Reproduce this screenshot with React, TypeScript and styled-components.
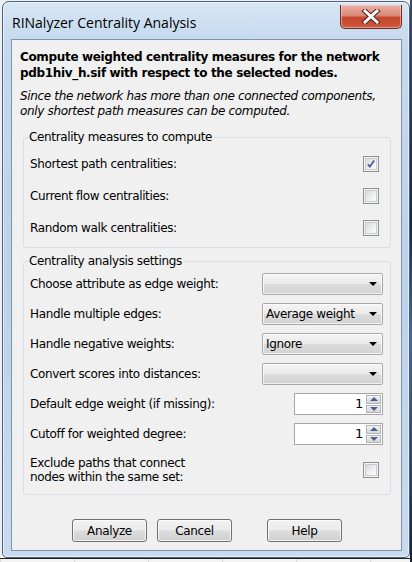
import { FC } from 'react';
import styled, { createGlobalStyle } from 'styled-components';

const GlobalStyle = createGlobalStyle`
  html, body {
    margin: 0;
    padding: 0;
  }
  body {
    width: 412px;
    height: 562px;
    overflow: hidden;
    background: #e4e7eb;
    font-family: "DejaVu Sans", Tahoma, sans-serif;
    font-size: 12px;
    letter-spacing: -0.36px;
    color: #000;
  }
`;

const Desktop = styled.div`
  width: 412px;
  height: 562px;
  display: grid;
  grid-template-columns: 410px 2px;
  grid-template-rows: 558px 4px;
`;

const WindowCell = styled.div`
  padding: 1px 0 0 2px;
  background: #eef0f3;
`;

const RightStrip = styled.div`
  grid-row: 1 / 3;
  grid-column: 2;
  background: linear-gradient(180deg, #3b4a66 0%, #1d2638 40%, #4c6a92 60%, #1a2233 100%);
`;

const BottomStrip = styled.div`
  background: repeating-linear-gradient(90deg, #dadada 0px, #dadada 1px, #f4f4f4 1px, #f4f4f4 74px);
  border-top: 1px solid #222;
`;

const Window = styled.div`
  box-sizing: border-box;
  width: 408px;
  height: 557px;
  border: 1px solid #4d627c;
  border-radius: 7px 7px 5px 5px;
  background: linear-gradient(180deg, #d7e6f5 0%, #c5d9ee 7%, #bcd2ea 50%, #c8dbef 100%);
  box-shadow: inset 0 0 0 1px rgba(255, 255, 255, 0.55);
  display: flex;
  flex-direction: column;
`;

const TitleBar = styled.div`
  height: 37px;
  display: flex;
  align-items: flex-start;
  padding-left: 9px;
`;

const TitleText = styled.div`
  margin-top: 11px;
  font-family: "Open Sans", "Noto Sans", sans-serif;
  font-size: 14px;
  letter-spacing: 0;
  line-height: 20px;
  color: #000;
`;

const CloseButton = styled.div`
  margin-left: auto;
  margin-right: 7px;
  margin-top: 3px;
  width: 62px;
  height: 24px;
  box-sizing: border-box;
  border: 1px solid #6e2a22;
  border-top: none;
  border-radius: 0 0 5px 5px;
  background: linear-gradient(180deg, #eab1a6 0%, #d98a78 45%, #c5452c 55%, #cf5b3d 100%);
  box-shadow: inset 0 0 0 1px rgba(255, 220, 210, 0.5);
  display: flex;
  align-items: center;
  justify-content: center;
`;

const CloseGlyph: FC = () => (
  <svg width="22" height="15" viewBox="0 0 22 15">
    <path d="M5 2 L17 13 M17 2 L5 13" stroke="#5a2119" strokeWidth="5" strokeLinecap="square" />
    <path d="M5 2 L17 13 M17 2 L5 13" stroke="#ffffff" strokeWidth="3" strokeLinecap="square" />
  </svg>
);

const Client = styled.div`
  flex: 1;
  margin: 0 7px 6px 8px;
  border: 1px solid #7f93aa;
  background: #f0f0f0;
  display: flex;
  flex-direction: column;
`;

const Heading = styled.p`
  margin: 9px 0 0 8px;
  font-weight: bold;
  font-size: 12px;
  line-height: 16px;
  letter-spacing: -0.34px;
`;

const Note = styled.p`
  margin: 8px 0 0 8px;
  font-style: italic;
  font-size: 12px;
  line-height: 15px;
  letter-spacing: -0.33px;
`;

const Group = styled.fieldset<{ $top: number; $pad: number }>`
  margin: ${(p) => p.$top}px 10px 0 11px;
  padding: ${(p) => p.$pad}px 7px 3px 6px;
  border: 1px solid #d5dfe5;
  border-radius: 3px;
  min-width: 0;
`;

const Legend = styled.legend`
  margin-left: -1px;
  padding: 0 2px 0 0;
  font-size: 12px;
  line-height: 14px;
`;

const Row = styled.div<{ $h: number }>`
  height: ${(p) => p.$h}px;
  display: flex;
  align-items: center;
  justify-content: space-between;
`;

const Label = styled.span`
  line-height: 14px;
`;

const CheckBox = styled.div`
  box-sizing: border-box;
  width: 16px;
  height: 16px;
  margin-right: 4px;
  border: 1px solid #8f8f8f;
  padding: 1px;
  background: #f4f4f4;
  & > div {
    width: 100%;
    height: 100%;
    box-sizing: border-box;
    border: 1px solid #c9cdd3;
    background: linear-gradient(135deg, #d6d8dc 0%, #eceef0 50%, #fbfbfb 100%);
    display: flex;
    align-items: center;
    justify-content: center;
  }
`;

const CheckMark: FC = () => (
  <svg width="12" height="12" viewBox="0 0 12 12">
    <path d="M2.2 6.2 L4.6 9.2 L9.8 1.8" stroke="#43568f" strokeWidth="2" fill="none" />
  </svg>
);

const Combo = styled.div`
  box-sizing: border-box;
  width: 121px;
  height: 22px;
  border: 1px solid #a9a9a9;
  border-radius: 2px;
  background: linear-gradient(180deg, #f4f4f4 0%, #ebebeb 48%, #dcdcdc 52%, #d2d2d2 100%);
  box-shadow: inset 0 0 0 1px rgba(255, 255, 255, 0.7);
  display: flex;
  align-items: center;
  padding: 0 5px 0 3px;
`;

const ComboText = styled.span`
  flex: 1;
  line-height: 14px;
  white-space: nowrap;
`;

const Arrow = styled.span`
  width: 0;
  height: 0;
  border-left: 4px solid transparent;
  border-right: 4px solid transparent;
  border-top: 4px solid #000;
`;

const Spinner = styled.div`
  box-sizing: border-box;
  width: 89px;
  height: 22px;
  border: 1px solid #a6a6a6;
  background: #fff;
  display: flex;
  align-items: center;
  padding: 1px 1px 1px 0;
`;

const SpinValue = styled.span`
  flex: 1;
  text-align: right;
  padding-right: 3px;
  font-size: 13px;
  line-height: 14px;
`;

const SpinButtons = styled.div`
  width: 15px;
  height: 100%;
  display: flex;
  flex-direction: column;
  gap: 1px;
`;

const SpinButton = styled.div<{ $down?: boolean }>`
  flex: 1;
  box-sizing: border-box;
  border: 1px solid #b4b4b4;
  background: linear-gradient(180deg, #f3f3f3 0%, #e3e3e3 50%, #d6d6d6 100%);
  display: flex;
  align-items: center;
  justify-content: center;
  &::after {
    content: '';
    width: 0;
    height: 0;
    border-left: 4px solid transparent;
    border-right: 4px solid transparent;
    ${(p) => (p.$down ? 'border-top: 4px solid #4c5d91;' : 'border-bottom: 4px solid #4c5d91;')}
  }
`;

const ButtonRow = styled.div`
  margin-top: 24px;
  padding-left: 60px;
  display: flex;
  gap: 10px;
`;

const Button = styled.div<{ $gap?: number }>`
  box-sizing: border-box;
  width: 75px;
  height: 23px;
  margin-left: ${(p) => p.$gap ?? 0}px;
  border: 1px solid #707070;
  border-radius: 3px;
  background: linear-gradient(180deg, #f2f2f2 0%, #ebebeb 48%, #dddddd 52%, #cfcfcf 100%);
  box-shadow: inset 0 0 0 1px rgba(255, 255, 255, 0.75);
  display: flex;
  align-items: center;
  justify-content: center;
  line-height: 14px;
`;

const Check: FC<{ checked?: boolean }> = ({ checked }) => (
  <CheckBox>
    <div>{checked && <CheckMark />}</div>
  </CheckBox>
);

const Select: FC<{ value?: string }> = ({ value }) => (
  <Combo>
    <ComboText>{value}</ComboText>
    <Arrow />
  </Combo>
);

const NumberField: FC<{ value: number }> = ({ value }) => (
  <Spinner>
    <SpinValue>{value}</SpinValue>
    <SpinButtons>
      <SpinButton />
      <SpinButton $down />
    </SpinButtons>
  </Spinner>
);

const measures = [
  { label: 'Shortest path centralities:', checked: true },
  { label: 'Current flow centralities:', checked: false },
  { label: 'Random walk centralities:', checked: false },
];

const App: FC = () => {
  return (
    <>
      <GlobalStyle />
      <Desktop>
        <WindowCell>
          <Window>
            <TitleBar>
              <TitleText>RINalyzer Centrality Analysis</TitleText>
              <CloseButton>
                <CloseGlyph />
              </CloseButton>
            </TitleBar>
            <Client>
              <Heading>
                Compute weighted centrality measures for the network
                <br />
                pdb1hiv_h.sif with respect to the selected nodes.
              </Heading>
              <Note>
                Since the network has more than one connected components,
                <br />
                only shortest path measures can be computed.
              </Note>

              <Group $top={11} $pad={4}>
                <Legend>Centrality measures to compute</Legend>
                {measures.map((m) => (
                  <Row key={m.label} $h={32}>
                    <Label>{m.label}</Label>
                    <Check checked={m.checked} />
                  </Row>
                ))}
              </Group>

              <Group $top={6} $pad={1}>
                <Legend>Centrality analysis settings</Legend>
                <Row $h={30}>
                  <Label>Choose attribute as edge weight:</Label>
                  <Select />
                </Row>
                <Row $h={30}>
                  <Label>Handle multiple edges:</Label>
                  <Select value="Average weight" />
                </Row>
                <Row $h={30}>
                  <Label>Handle negative weights:</Label>
                  <Select value="Ignore" />
                </Row>
                <Row $h={30}>
                  <Label>Convert scores into distances:</Label>
                  <Select />
                </Row>
                <Row $h={30}>
                  <Label>Default edge weight (if missing):</Label>
                  <NumberField value={1} />
                </Row>
                <Row $h={30}>
                  <Label>Cutoff for weighted degree:</Label>
                  <NumberField value={1} />
                </Row>
                <Row $h={42}>
                  <Label>
                    Exclude paths that connect
                    <br />
                    nodes within the same set:
                  </Label>
                  <Check />
                </Row>
              </Group>

              <ButtonRow>
                <Button>Analyze</Button>
                <Button>Cancel</Button>
                <Button $gap={25}>Help</Button>
              </ButtonRow>
            </Client>
          </Window>
        </WindowCell>
        <RightStrip />
        <BottomStrip />
      </Desktop>
    </>
  );
};

export default App;
